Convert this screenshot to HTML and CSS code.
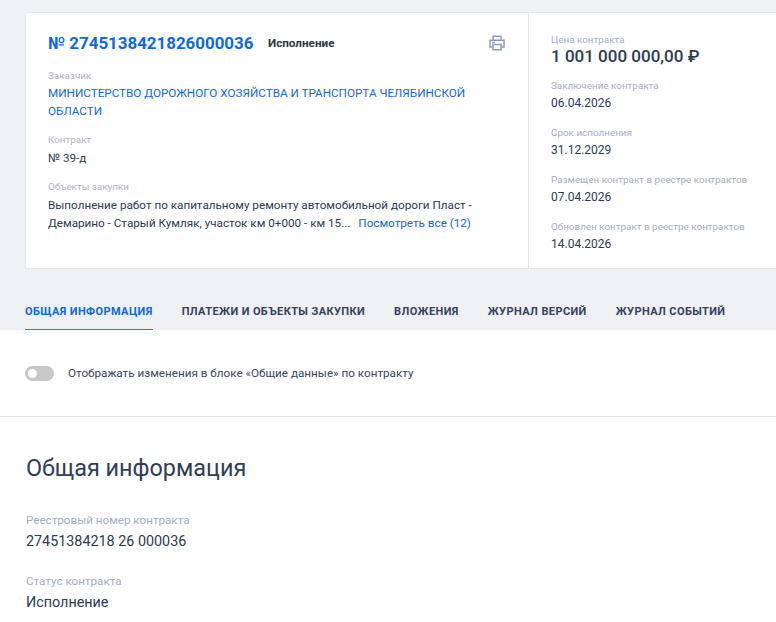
FILE: index.html
```html
<!DOCTYPE html>
<html lang="ru">
  <head>
    <meta charset="UTF-8" />
    <meta name="viewport" content="width=device-width, initial-scale=1.0" />
    <title>Контракт № 2745138421826000036</title>
    <link rel="stylesheet" href="styles.css">
  </head>
  <body>
    <div class="top">
      <div class="card">
        <div class="card-main">
          <div class="head">
            <a class="number" href="#">№ 2745138421826000036</a>
            <span class="status">Исполнение</span>
            <svg class="print" width="16" height="16" viewBox="0 0 16 16" fill="none" stroke="#8f9dbd" stroke-width="1.5">
              <path d="M4 5V1.200h8V5" />
              <path d="M4 12H1V5.200h14V12h-3" />
              <path d="M4 9.500h8v5.300H4z" />
              <path d="M3 7.500h3" />
            </svg>
          </div>
          <div class="field first">
            <div class="label muted">Заказчик</div>
            <a class="link" href="#">МИНИСТЕРСТВО ДОРОЖНОГО ХОЗЯЙСТВА И ТРАНСПОРТА ЧЕЛЯБИНСКОЙ ОБЛАСТИ</a>
          </div>
          <div class="field">
            <div class="label muted">Контракт</div>
            <div class="value">№ 39-д</div>
          </div>
          <div class="field">
            <div class="label muted">Объекты закупки</div>
            <div class="value">Выполнение работ по капитальному ремонту автомобильной дороги Пласт - Демарино - Старый Кумляк, участок км 0+000 - км 15... <a class="link more" href="#">Посмотреть все (12)</a></div>
          </div>
        </div>
        <div class="card-side">
          <div class="side-item">
            <div class="label">Цена контракта</div>
            <div class="price">1 001 000 000,00 ₽</div>
          </div>
          <div class="side-item">
            <div class="label">Заключение контракта</div>
            <div class="value">06.04.2026</div>
          </div>
          <div class="side-item">
            <div class="label">Срок исполнения</div>
            <div class="value">31.12.2029</div>
          </div>
          <div class="side-item">
            <div class="label">Размещен контракт в реестре контрактов</div>
            <div class="value">07.04.2026</div>
          </div>
          <div class="side-item">
            <div class="label">Обновлен контракт в реестре контрактов</div>
            <div class="value">14.04.2026</div>
          </div>
        </div>
      </div>
      <div class="tabs">
        <a class="tab active" href="#">Общая информация</a>
        <a class="tab" href="#">Платежи и объекты закупки</a>
        <a class="tab" href="#">Вложения</a>
        <a class="tab" href="#">Журнал версий</a>
        <a class="tab" href="#">Журнал событий</a>
      </div>
    </div>
    <div class="switch-row">
      <span class="switch"><span class="knob"></span></span>
      <span class="switch-text">Отображать изменения в блоке «Общие данные» по контракту</span>
    </div>
    <div class="info">
      <h2>Общая информация</h2>
      <div class="info-item">
        <div class="info-label">Реестровый номер контракта</div>
        <div class="info-value">27451384218 26 000036</div>
      </div>
      <div class="info-item">
        <div class="info-label">Статус контракта</div>
        <div class="info-value">Исполнение</div>
      </div>
    </div>
  </body>
</html>
```

FILE: styles.css
```css
* {
  margin: 0;
  padding: 0;
  box-sizing: border-box;
}
html,
body {
  height: 622px;
  overflow: hidden;
}
body {
  background: #fff;
  color: #2c3a52;
  font-family: Roboto, "Liberation Sans", sans-serif;
}
a {
  text-decoration: none;
}
.top {
  background: #eef0f3;
  height: 330px;
  padding: 12px 0 0 25px;
}
.card {
  display: flex;
  height: 257px;
  background: #fff;
  border: 1px solid #e2e8f0;
  border-right: 0;
  border-radius: 2px 0 0 2px;
}
.card-main {
  width: 503px;
  padding: 19px 22px 0;
  border-right: 1px solid #dfe4f0;
  flex-shrink: 0;
}
.head {
  display: flex;
  align-items: center;
  height: 22px;
}
.number {
  color: #0d69e0;
  font-size: 16.900px;
  font-weight: 700;
}
.status {
  margin-left: 14.500px;
  font-size: 11.700px;
  font-weight: 700;
  color: #2b3445;
}
.print {
  margin-left: auto;
  margin-right: 1px;
}
.field {
  margin-top: 13px;
}
.field.first {
  margin-top: 15px;
}
.label {
  font-size: 9.900px;
  line-height: 14px;
  color: #a3aec6;
}
.label.muted {
  color: #aeb3c4;
}
.link {
  color: #0d69e0;
  font-size: 11.700px;
  line-height: 18px;
  display: block;
  margin-top: 1px;
}
.link.more {
  display: inline;
  margin: 0 0 0 5px;
}
.value {
  font-size: 11.700px;
  line-height: 18px;
  margin-top: 2px;
}
.card-side {
  padding: 20px 0 0 22px;
  white-space: nowrap;
}
.side-item {
  margin-bottom: 14px;
}
.side-item .value {
  font-size: 12px;
  margin-top: 1px;
}
.price {
  font-size: 17px;
  font-weight: 500;
  line-height: 18px;
}
.tabs {
  display: flex;
  gap: 29px;
  margin-top: 24px;
  height: 37px;
}
.tab {
  font-size: 11px;
  font-weight: 700;
  line-height: 38px;
  letter-spacing: 0.4px;
  text-transform: uppercase;
  color: #35415c;
  height: 37px;
}
.tab.active {
  color: #0d69e0;
  border-bottom: 1px solid #2a7de1;
}
.switch-row {
  display: flex;
  align-items: center;
  height: 87px;
  padding-left: 25px;
  border-bottom: 1px solid #e4e6ee;
}
.switch {
  display: block;
  width: 29px;
  height: 15px;
  border-radius: 8px;
  background: #c8c8c8;
  padding: 3px;
}
.knob {
  display: block;
  width: 9px;
  height: 9px;
  border-radius: 50%;
  background: #fff;
}
.switch-text {
  margin-left: 14px;
  font-size: 11.700px;
  color: #3a4660;
}
.info {
  padding: 36px 26px 0;
}
h2 {
  font-size: 23.400px;
  font-weight: 400;
  line-height: 30px;
  color: #2f3d57;
}
.info-item {
  margin-top: 21px;
}
h2 + .info-item {
  margin-top: 29px;
}
.info-label {
  font-size: 11.650px;
  line-height: 16px;
  color: #a3aec6;
}
.info-value {
  font-size: 14.350px;
  line-height: 20px;
  margin-top: 4px;
}
```
